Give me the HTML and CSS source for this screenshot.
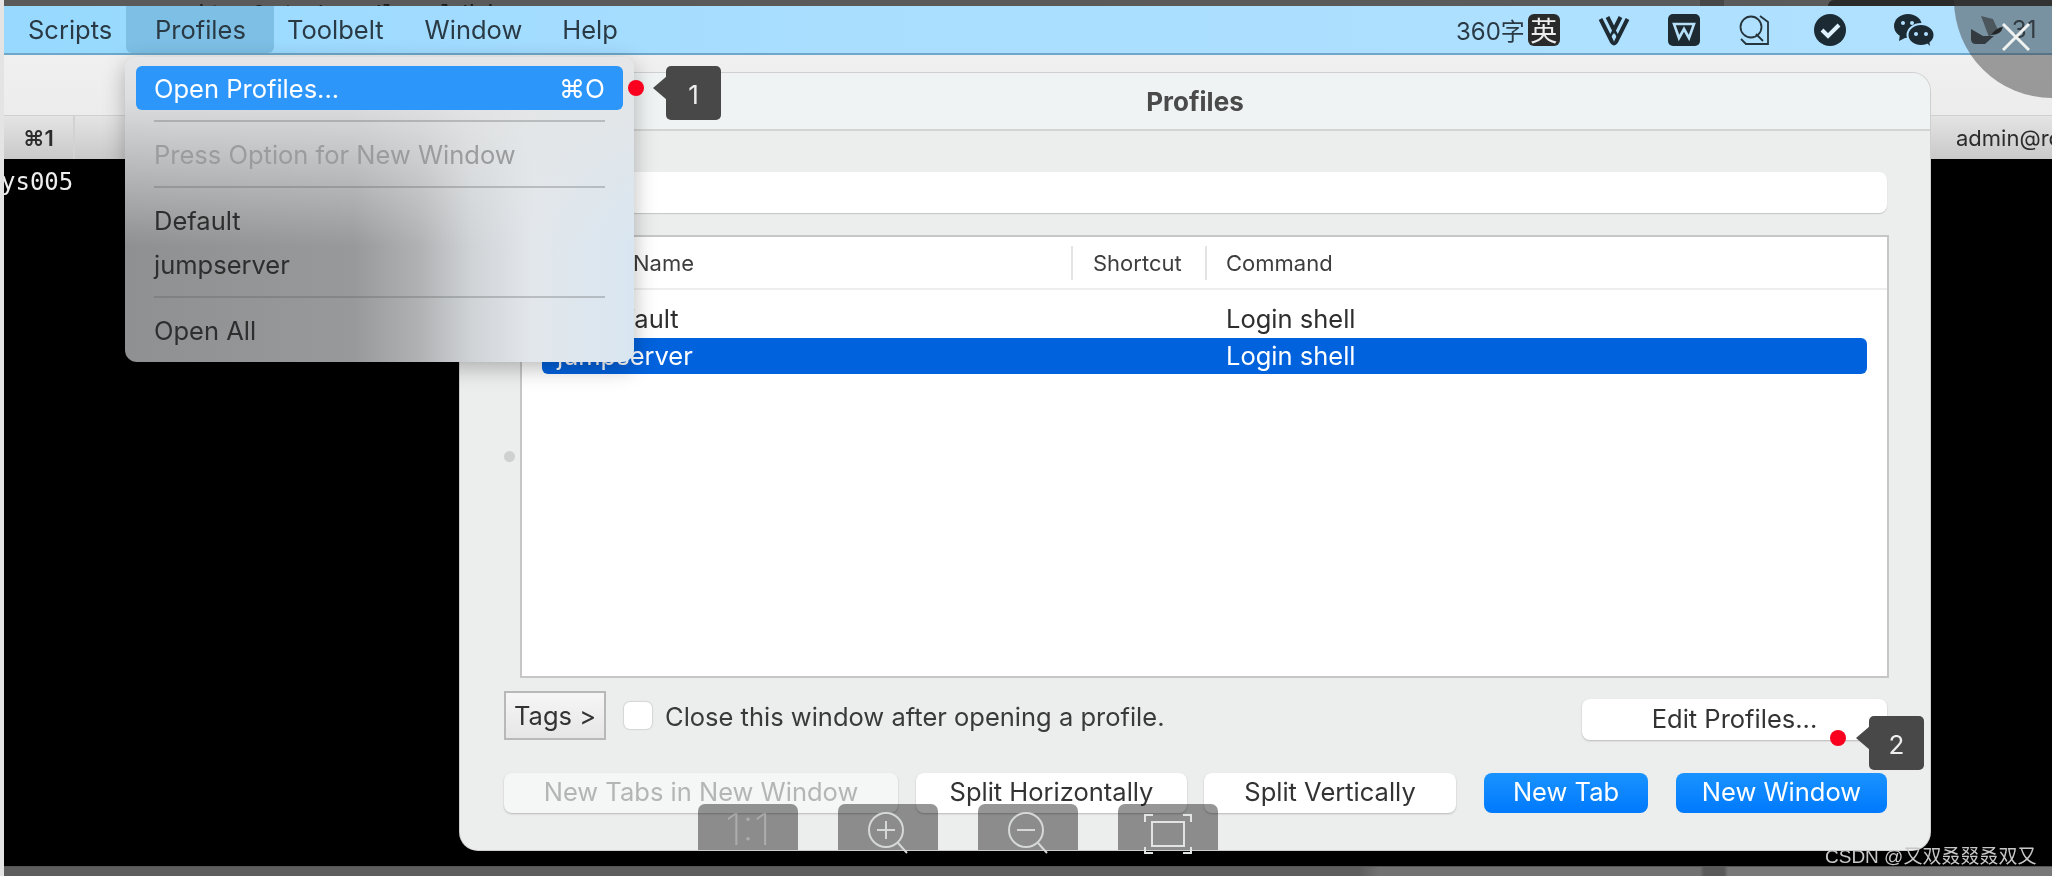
FILE: index.html
```html
<!DOCTYPE html>
<html lang="en">
<head>
<meta charset="utf-8">
<title>Profiles</title>
<link rel="stylesheet" href="styles.css">
</head>
<body>
<div class="screen">
  <div class="top-strip"><span class="strip-text">it  0 * /usr/local/bin</span><span class="strip-dark"></span></div>
  <header class="menubar">
    <nav class="menus">
      <span class="menu-title first">Scripts</span>
      <span class="menu-title open">Profiles</span>
      <span class="menu-title">Toolbelt</span>
      <span class="menu-title">Window</span>
      <span class="menu-title">Help</span>
    </nav>
    <div class="status">
      <span class="status-text">360字</span>
      <span class="ime">英</span>
      <svg class="ico vee" viewBox="0 0 32 32"><path d="M2.500 5 14 28q2 3 4 0L29.500 5" fill="none" stroke="#1f2b33" stroke-width="4"/><path d="M9.500 3 16 16 22.500 3" fill="none" stroke="#1f2b33" stroke-width="4"/><path d="M16 15.500 12 23M16 15.500 20 23" stroke="#1f2b33" stroke-width="2.500"/></svg>
      <svg class="ico wps" viewBox="0 0 32 32"><rect width="32" height="32" rx="5" fill="#1d2a31"/><path d="M6 10h20l-5 14-5-9-5 9z" fill="none" stroke="#b5e0f7" stroke-width="2.600"/></svg>
      <svg class="ico doc" viewBox="0 0 32 32"><circle cx="13" cy="13" r="10.500" fill="none" stroke="#26343c" stroke-width="1.800"/><path d="M18 20l7 7M22 2l8 6v22H8l-5-5" fill="none" stroke="#26343c" stroke-width="1.800"/></svg>
      <svg class="ico check" viewBox="0 0 32 32"><circle cx="16" cy="16" r="16" fill="#1c2a33"/><path d="M8 16l6 6 11-11" fill="none" stroke="#dff1fd" stroke-width="4"/></svg>
      <svg class="ico chat" viewBox="0 0 40 32"><ellipse cx="14" cy="12" rx="14" ry="12" fill="#1c2a33"/><path d="M6 20l-1 7 8-4z" fill="#1c2a33"/><ellipse cx="27" cy="21" rx="13.500" ry="11" fill="#1c2a33" stroke="#b0e0ff" stroke-width="2"/><path d="M33 29l3 3-1-6z" fill="#1c2a33"/><circle cx="9" cy="9" r="2" fill="#b0e0ff"/><circle cx="18" cy="9" r="2" fill="#b0e0ff"/><circle cx="22" cy="20" r="2" fill="#b0e0ff"/><circle cx="32" cy="20" r="2" fill="#b0e0ff"/></svg>
      <svg class="ico fold" viewBox="0 0 33 28"><path d="M10 0l12 3 5 11-9 7z" fill="#5a6f7c"/><path d="M0 13l12 7h11l-9 8H5q-5 0-5-5z" fill="#2b3a43"/><path d="M20 19q6-8 12-8-2 8-12 8z" fill="#0c0f11"/></svg>
      <span class="status-text clock">31</span>
    </div>
  </header>
  <div class="toolbar"></div>
  <div class="tabbar">
    <span class="tab">⌘1</span>
    <span class="tab-user">admin@ro</span>
  </div>
  <main class="terminal"><span class="term-line">ys005</span></main>
  <div class="bottom-strip"></div>

  <section class="dialog">
    <div class="dialog-title">Profiles</div>
    <div class="dialog-body">
      <div class="search"></div>
      <div class="list-wrap">
        <div class="gutter"><span class="gutter-dot"></span></div>
        <div class="table">
          <div class="thead">
            <span class="th-name">Name</span>
            <span class="th-short">Shortcut</span>
            <span class="th-cmd">Command</span>
          </div>
          <div class="trow">
            <span class="td-name indent">Default</span>
            <span class="td-cmd">Login shell</span>
          </div>
          <div class="trow selected">
            <span class="td-name">jumpserver</span>
            <span class="td-cmd">Login shell</span>
          </div>
        </div>
      </div>
      <div class="options">
        <span class="tags">Tags &gt;</span>
        <span class="checkbox"></span>
        <span class="option-label">Close this window after opening a profile.</span>
        <span class="btn edit">Edit Profiles...</span>
      </div>
      <div class="actions">
        <span class="btn disabled w-tabs">New Tabs in New Window</span>
        <span class="btn w-splith">Split Horizontally</span>
        <span class="btn w-splitv">Split Vertically</span>
        <span class="btn primary w-newtab">New Tab</span>
        <span class="btn primary w-newwin">New Window</span>
      </div>
    </div>
  </section>

  <div class="dropdown">
    <div class="item active"><span>Open Profiles...</span><span class="shortcut">⌘O</span></div>
    <div class="sep"></div>
    <div class="item muted">Press Option for New Window</div>
    <div class="sep"></div>
    <div class="item">Default</div>
    <div class="item">jumpserver</div>
    <div class="sep"></div>
    <div class="item">Open All</div>
  </div>

  <span class="dot dot-one"></span>
  <span class="tip tip-one">1</span>
  <span class="dot dot-two"></span>
  <span class="tip tip-two">2</span>

  <div class="viewer">
    <span class="vbtn ratio">1:1</span>
    <span class="vbtn"><svg class="vico" viewBox="0 0 48 52"><circle cx="22" cy="19" r="17" fill="none" stroke="#d6d8d7" stroke-width="2"/><path d="M34 32l9 10M22 10v18M13 19h18" fill="none" stroke="#d6d8d7" stroke-width="2"/></svg></span>
    <span class="vbtn"><svg class="vico" viewBox="0 0 48 52"><circle cx="22" cy="19" r="17" fill="none" stroke="#d6d8d7" stroke-width="2"/><path d="M34 32l9 10M13 19h18" fill="none" stroke="#d6d8d7" stroke-width="2"/></svg></span>
    <span class="vbtn"><svg class="vico frame" viewBox="0 0 48 40"><rect x="8" y="8" width="32" height="24" fill="none" stroke="#e2e4e3" stroke-width="2"/><path d="M1 8V1h8M39 1h8v7M47 33v6h-8M9 39H1v-6" fill="none" stroke="#e2e4e3" stroke-width="2"/></svg></span>
  </div>

  <div class="close-disc"></div>
  <svg class="close-x" viewBox="0 0 28 28"><path d="M1 1l26 26M27 1L1 27" stroke="#f0f2f2" stroke-width="3"/></svg>
  <span class="watermark">CSDN @又双叒叕叒双又</span>
</div>
</body>
</html>
```
FILE: styles.css
```css
* { box-sizing: border-box; }
html, body { margin: 0; padding: 0; background: #000; }
body { width: 2052px; height: 876px; overflow: hidden; font-family: Inter, "Liberation Sans", "Noto Sans CJK SC", sans-serif; }

.screen {
  position: relative;
  width: 2052px;
  height: 876px;
  padding-left: 4px;
  display: flex;
  flex-direction: column;
  background: #e4e4e4;
  overflow: hidden;
  filter: blur(0.6px);
}

.top-strip { height: 6px; background: linear-gradient(to right, #5a5a5a 1696px, #474747 1696px, #474747 1720px, #5a5a5a 1720px); display: flex; overflow: hidden; flex: none; }
.strip-text { display: block; height: 6px; overflow: hidden; margin-left: 190px; font: 24px/30px "DejaVu Sans Mono", monospace; color: #1c1c1c; white-space: pre; }
.strip-dark { margin-left: auto; width: 224px; height: 6px; background: #2b2b2b; border-top-left-radius: 10px; }

.menubar {
  height: 49px;
  flex: none;
  display: flex;
  justify-content: space-between;
  background: linear-gradient(to right, #97d9ff, #a9deff 40%, #b1e1ff);
  border-bottom: 2px solid #6ea7c9;
  color: #2a3a45;
  font-size: 25.500px;
}
.menus { display: flex; align-items: center; height: 47px; }
.menu-title { display: flex; align-items: center; height: 100%; flex: none; }
.first { margin-left: 24px; width: 98px; }
.open { background: #7dbfe5; border-radius: 0 0 6px 6px; padding: 0 29px; width: 148px; }
.menu-title:nth-child(3) { margin-left: 13px; }
.menu-title:nth-child(4) { margin-left: 41px; }
.menu-title:nth-child(5) { margin-left: 40px; }

.status { position: relative; display: flex; align-items: center; height: 47px; width: 600px; flex: none; }
.status-text { font-size: 24px; color: #2a3a45; margin-left: 4px; }
.ime { margin-left: 3px; width: 32px; height: 32px; background: #2a2a2a; border-radius: 6px; color: #eee; font-size: 27px; line-height: 32px; text-align: center; font-family: "Noto Sans CJK SC", sans-serif; }
.ico { display: block; flex: none; width: 32px; height: 32px; }
.vee { margin-left: 38px; }
.wps { margin-left: 38px; }
.doc { margin-left: 38px; }
.check { margin-left: 44px; }
.chat { margin-left: 48px; width: 40px; }
.fold { margin-left: 37px; width: 33px; height: 28px; }
.clock { margin-left: 8px; }

.toolbar { height: 60px; flex: none; background: linear-gradient(#f0f0f0, #ececec); }
.tabbar { height: 44px; flex: none; display: flex; justify-content: space-between; align-items: center; background: linear-gradient(#e4e4e4, #c9c9c9); border-top: 1px solid #d0d0d0; font-size: 22px; color: #2c2c2c; }
.tab { width: 71px; height: 100%; display: flex; align-items: center; justify-content: center; border-right: 2px solid #d2d2d2; font-weight: 600; }
.tab-user { width: 96px; overflow: hidden; white-space: nowrap; }
.terminal { flex: 1; background: #000; color: #eee; padding-top: 9px; overflow: hidden; }
.term-line { display: block; margin-left: -3px; font: 24px/28px "DejaVu Sans Mono", monospace; }
.bottom-strip { height: 10px; flex: none; border-top: 1px solid #555; background: linear-gradient(to right, #5e5e5e 1355px, #727272 1375px, #727272 1696px, #5a5a5a 1700px, #5a5a5a 1720px, #787878 1724px); }

.dialog {
  position: absolute;
  left: 460px;
  top: 73px;
  width: 1470px;
  height: 777px;
  background: #eceeed;
  border-radius: 18px;
  box-shadow: 0 0 0 1px #cfcfcf;
  display: flex;
  flex-direction: column;
  color: #2e2e2e;
  font-size: 25.500px;
  overflow: hidden;
}
.dialog-title { height: 58px; flex: none; display: flex; align-items: center; justify-content: center; background: #eff3f3; border-bottom: 2px solid #d3d5d5; font-weight: 700; color: #4a4a4a; font-size: 26px; }
.dialog-body { display: flex; flex-direction: column; padding: 41px 43px 0 44px; }
.search { height: 41px; background: #fff; border-radius: 8px; box-shadow: 0 1px 1px #c4c4c4; margin-bottom: 22px; }
.list-wrap { display: flex; height: 443px; margin-right: -2px; }
.gutter { width: 16px; flex: none; display: flex; align-items: center; padding-bottom: 1px; }
.gutter-dot { width: 11px; height: 11px; border-radius: 50%; background: #cfd1d1; }
.table { flex: 1; background: #fff; border: 2px solid #c6c6c6; }
.thead { height: 53px; display: flex; align-items: center; border-bottom: 2px solid #eeeeee; color: #3e3e3e; font-size: 22px; }
.th-name { width: 549px; padding-left: 111px; }
.th-short { width: 134px; padding-left: 20px; border-left: 2px solid #e4e4e4; height: 34px; display: flex; align-items: center; }
.th-cmd { padding-left: 19px; border-left: 2px solid #e4e4e4; height: 34px; display: flex; align-items: center; }
.trow { height: 36px; margin: 0 20px; padding-bottom: 2px; display: flex; align-items: center; font-size: 25.500px; border-radius: 6px; }
.thead + .trow { margin-top: 11px; }
.td-name { width: 684px; padding-left: 15px; }
.indent { padding-left: 50px; }
.selected { background: #0162dd; color: #fff; margin-top: 1px; }

.options { display: flex; align-items: center; height: 49px; margin-top: 13px; }
.tags { width: 102px; height: 49px; flex: none; display: flex; align-items: center; justify-content: center; border: 2px solid #b8b8b8; background: linear-gradient(#f6f6f6, #e6e6e6); font-size: 25.500px; color: #333; }
.checkbox { width: 28px; height: 27px; flex: none; margin-left: 18px; background: #fff; border-radius: 6px; box-shadow: 0 0 1px 1px #d4d4d4; }
.option-label { margin-left: 13px; padding-top: 1px; white-space: nowrap; font-size: 25.500px; color: #3a3a3a; }
.btn { display: flex; align-items: center; justify-content: center; height: 40px; padding-bottom: 3px; flex: none; background: #fff; border-radius: 8px; box-shadow: 0 1px 2px #b8b8b8; font-size: 25.500px; color: #333; white-space: nowrap; }
.edit { margin-left: auto; width: 305px; height: 41px; align-self: flex-end; }
.actions { display: flex; margin-top: 33px; }
.disabled { background: #f5f6f6; color: #b4b6b6; }
.primary { background: linear-gradient(#1a93ff, #0079fd); color: #fff; box-shadow: none; }
.w-tabs { width: 394px; }
.w-splith { width: 271px; margin-left: 18px; }
.w-splitv { width: 252px; margin-left: 17px; }
.w-newtab { width: 164px; margin-left: 28px; }
.w-newwin { width: 211px; margin-left: 28px; }

.dropdown {
  position: absolute;
  left: 125px;
  top: 57px;
  width: 509px;
  height: 305px;
  padding: 9px 11px 10px;
  border-radius: 12px;
  color: #2e2e2e;
  font-size: 25.500px;
  box-shadow: 0 6px 22px rgba(0, 0, 0, .28);
  background:
    linear-gradient(#e4e6e7 0%, rgba(228, 230, 231, .9) 14%, rgba(228, 230, 231, 0) 62%),
    linear-gradient(to right, #8f9091 0%, #98999a 45%, #b0b2b4 58%, #d0d3d6 68%, #e2e7eb 80%, #d9e6f1 100%);
}
.item { height: 44px; display: flex; align-items: center; justify-content: space-between; padding: 0 18px; white-space: nowrap; }
.active { background: #2d96fb; color: #fff; border-radius: 6px; }
.shortcut { font-size: 26px; }
.muted { color: #9a9c9e; }
.sep { height: 2px; margin: 10px 18px; background: rgba(90, 92, 94, .3); }

.dot { position: absolute; width: 16px; height: 16px; border-radius: 50%; background: #f8001e; }
.dot-one { left: 628px; top: 80px; }
.dot-two { left: 1830px; top: 730px; }
.tip { position: absolute; width: 55px; height: 54px; padding-top: 3px; background: #474847; border-radius: 5px; color: #eee; font-size: 26px; display: flex; align-items: center; justify-content: center; }
.tip::before { content: ""; position: absolute; left: -13px; border-style: solid; border-width: 12px 14px 12px 0; border-color: transparent #474847 transparent transparent; }
.tip-one { left: 666px; top: 66px; }
.tip-one::before { top: 10px; }
.tip-two { left: 1869px; top: 716px; }
.tip-two::before { top: 10px; }

.viewer { position: absolute; left: 698px; top: 804px; display: flex; gap: 40px; }
.vbtn { position: relative; width: 100px; height: 46px; display: block; background: rgba(0, 0, 0, .41); border-radius: 7px 7px 0 0; }
.ratio { color: rgba(255, 255, 255, .28); font-size: 44px; font-weight: 200; line-height: 50px; text-align: center; overflow: hidden; }
.vico { position: absolute; left: 26px; top: 7px; width: 48px; height: 52px; }
.frame { left: 26px; top: 10px; height: 40px; }

.close-disc { position: absolute; left: 1954px; top: -98px; width: 196px; height: 196px; border-radius: 50%; background: rgba(60, 60, 60, .48); }
.close-x { position: absolute; left: 2002px; top: 23px; width: 28px; height: 28px; }
.watermark { position: absolute; left: 1825px; top: 845px; font-size: 19px; line-height: 24px; color: #c8c8c8; white-space: nowrap; font-family: "Liberation Sans", "Noto Sans CJK SC", sans-serif; }
```
